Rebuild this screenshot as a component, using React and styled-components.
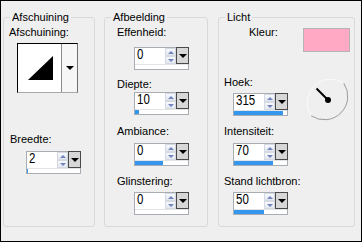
import React from 'react';
import styled, { createGlobalStyle } from 'styled-components';

const GlobalStyle = createGlobalStyle`
  html, body {
    margin: 0;
    padding: 0;
    background: #fff;
  }
  body {
    font-family: "Liberation Sans", Arial, sans-serif;
  }
`;

const bevel = [
    { label: 'Breedte:', value: '2', fill: 2, mt: 40, ml: 6, ct: 5, cl: 22 },
];

const image = [
    { label: 'Effenheid:', value: '0', fill: 0, mt: 2, ct: 8 },
    { label: 'Diepte:', value: '10', fill: 8, mt: 8, ct: 1 },
    { label: 'Ambiance:', value: '0', fill: 53, mt: 10, ct: 5 },
    { label: 'Glinstering:', value: '0', fill: 0, mt: 9, ct: 4 },
];

const light = [
    { label: 'Intensiteit:', value: '70', fill: 74, mt: 1, ct: 5 },
    { label: 'Stand lichtbron:', value: '50', fill: 57, mt: 9, ct: 4 },
];

const Spin = ({ value, fill, $mt, $ml }) => (
    <SpinBox $mt={ $mt } $ml={ $ml }>
        <SpinTop>
            <Edit><Digits>{ value }</Digits></Edit>
            <Arrows>
                <ArrowHalf><Up /></ArrowHalf>
                <ArrowHalf><Down /></ArrowHalf>
            </Arrows>
            <Drop><DropArrow /></Drop>
        </SpinTop>
        <Track>
            <Bar style={ { width: `${fill}%` } } />
        </Track>
    </SpinBox>
);

const App = () => {
    return (
        <>
            <GlobalStyle />
            <Frame>
                <Group $w={ 92 } $ml={ 0 }>
                    <Legend>Afschuining</Legend>
                    <Body>
                        <Label $mt={ 2 } $ml={ 5 }>Afschuining:</Label>
                        <Preview>
                            <PreviewArea>
                                <svg width="43" height="48" viewBox="0 0 43 48">
                                    <polygon points="10,36 35,36 35,12" fill="#000" />
                                </svg>
                            </PreviewArea>
                            <PreviewButton><DropArrow /></PreviewButton>
                        </Preview>
                        { bevel.map((f) => (
                            <React.Fragment key={ f.label }>
                                <Label $mt={ f.mt } $ml={ f.ml }>{ f.label }</Label>
                                <Spin value={ f.value } fill={ f.fill } $mt={ f.ct } $ml={ f.cl } />
                            </React.Fragment>
                        )) }
                    </Body>
                </Group>

                <Group $w={ 104 } $ml={ 9 }>
                    <Legend>Afbeelding</Legend>
                    <Body>
                        { image.map((f) => (
                            <React.Fragment key={ f.label }>
                                <Label $mt={ f.mt } $ml={ 12 }>{ f.label }</Label>
                                <Spin value={ f.value } fill={ f.fill } $mt={ f.ct } $ml={ 29 } />
                            </React.Fragment>
                        )) }
                    </Body>
                </Group>

                <Group $w={ 137 } $ml={ 10 }>
                    <Legend>Licht</Legend>
                    <Body>
                        <Row $mt={ 2 }>
                            <Label $mt={ 0 } $ml={ 30 }>Kleur:</Label>
                            <Swatch />
                        </Row>
                        <Row $mt={ 24 }>
                            <Column>
                                <Label $mt={ 0 } $ml={ 5 }>Hoek:</Label>
                                <Spin value="315" fill={ 92 } $mt={ 4 } $ml={ 14 } />
                            </Column>
                            <Dial width="48" height="48" viewBox="0 0 48 48">
                                <path d="M40.8 7.2 A23.5 23.5 0 0 0 8.2 39.8" fill="none" stroke="#fbfbfb" strokeWidth="1" />
                                <path d="M8.2 39.8 A23.5 23.5 0 0 0 40.8 7.2" fill="none" stroke="#9a9a9a" strokeWidth="1" />
                                <line x1="13.5" y1="12.5" x2="25" y2="24" stroke="#000" strokeWidth="2" />
                                <circle cx="25" cy="24" r="3" fill="#000" />
                            </Dial>
                        </Row>
                        { light.map((f) => (
                            <React.Fragment key={ f.label }>
                                <Label $mt={ f.mt } $ml={ 5 }>{ f.label }</Label>
                                <Spin value={ f.value } fill={ f.fill } $mt={ f.ct } $ml={ 14 } />
                            </React.Fragment>
                        )) }
                    </Body>
                </Group>
            </Frame>
        </>
    );
};

export default App;

const Frame = styled.div`
    width: 362px;
    height: 242px;
    box-sizing: border-box;
    border: 1px solid #000;
    background-color: #efefef;
    display: flex;
    align-items: flex-start;
    padding: 10px 0 0 2px;
`;

const Group = styled.fieldset`
    width: ${ (p) => p.$w }px;
    height: 216px;
    box-sizing: border-box;
    margin: 0 0 0 ${ (p) => p.$ml }px;
    padding: 0;
    min-width: 0;
    border: 1px solid #d6dadc;
    border-radius: 3px;
`;

const Legend = styled.legend`
    margin-left: 6px;
    padding: 0 2px;
    font-size: 11px;
    line-height: 13px;
    color: #000;
`;

const Body = styled.div`
    display: flex;
    flex-direction: column;
    align-items: flex-start;
`;

const Row = styled.div`
    align-self: stretch;
    display: flex;
    align-items: flex-start;
    margin-top: ${ (p) => p.$mt }px;
`;

const Column = styled.div`
    display: flex;
    flex-direction: column;
    align-items: flex-start;
`;

const Label = styled.div`
    font-size: 11px;
    line-height: 13px;
    color: #000;
    white-space: nowrap;
    margin-top: ${ (p) => p.$mt }px;
    margin-left: ${ (p) => p.$ml }px;
`;

const Preview = styled.div`
    width: 61px;
    height: 50px;
    box-sizing: border-box;
    margin: 4px 0 0 13px;
    display: flex;
    border-top: 1px solid #000;
    border-left: 1px solid #000;
    border-right: 1px solid #707070;
    border-bottom: 1px solid #a8a8a8;
`;

const PreviewArea = styled.div`
    flex: 1;
    background-color: #fff;
    display: flex;
`;

const PreviewButton = styled.div`
    width: 16px;
    border-left: 1px solid #8a8a8a;
    background-color: #f6f6f6;
    display: flex;
    align-items: center;
    justify-content: center;
`;

const SpinBox = styled.div`
    width: 55px;
    height: 23px;
    box-sizing: border-box;
    margin-top: ${ (p) => p.$mt }px;
    margin-left: ${ (p) => p.$ml }px;
    border: 1px solid #a7adb3;
    background-color: #fff;
    display: flex;
    flex-direction: column;
`;

const SpinTop = styled.div`
    height: 16px;
    display: flex;
`;

const Edit = styled.div`
    flex: 1;
    padding-left: 2px;
    font-size: 14px;
    line-height: 13px;
    color: #000;
`;

const Digits = styled.span`
    display: inline-block;
    transform: scaleX(0.82);
    transform-origin: left center;
`;

const Arrows = styled.div`
    width: 11px;
    display: flex;
    flex-direction: column;
`;

const ArrowHalf = styled.div`
    flex: 1;
    box-sizing: border-box;
    border: 1px solid #d4d9e2;
    background: linear-gradient(#f7f9fc, #e2e7f0);
    display: flex;
    align-items: center;
    justify-content: center;
`;

const Up = styled.div`
    width: 0;
    height: 0;
    border-left: 3px solid transparent;
    border-right: 3px solid transparent;
    border-bottom: 3px solid #7384bd;
`;

const Down = styled.div`
    width: 0;
    height: 0;
    border-left: 3px solid transparent;
    border-right: 3px solid transparent;
    border-top: 3px solid #7384bd;
`;

const Drop = styled.div`
    width: 13px;
    height: 17px;
    box-sizing: border-box;
    margin: -1px -1px 0 0;
    border: 1px solid #4a4a4a;
    background-color: #d7d7d7;
    display: flex;
    align-items: center;
    justify-content: center;
`;

const DropArrow = styled.div`
    width: 0;
    height: 0;
    border-left: 4px solid transparent;
    border-right: 4px solid transparent;
    border-top: 4px solid #000;
`;

const Track = styled.div`
    flex: 1;
    display: flex;
    align-items: flex-end;
    background-color: #fff;
    border-top: 1px solid #e4e4e4;
`;

const Bar = styled.div`
    height: 4px;
    background-color: #3596ee;
`;

const Swatch = styled.div`
    width: 47px;
    height: 24px;
    box-sizing: border-box;
    margin: 2px 4px 0 auto;
    border: 1px solid #b4b4b4;
    background-color: #ffa9c5;
`;

const Dial = styled.svg`
    display: block;
    margin: 0 3px 0 auto;
`;
